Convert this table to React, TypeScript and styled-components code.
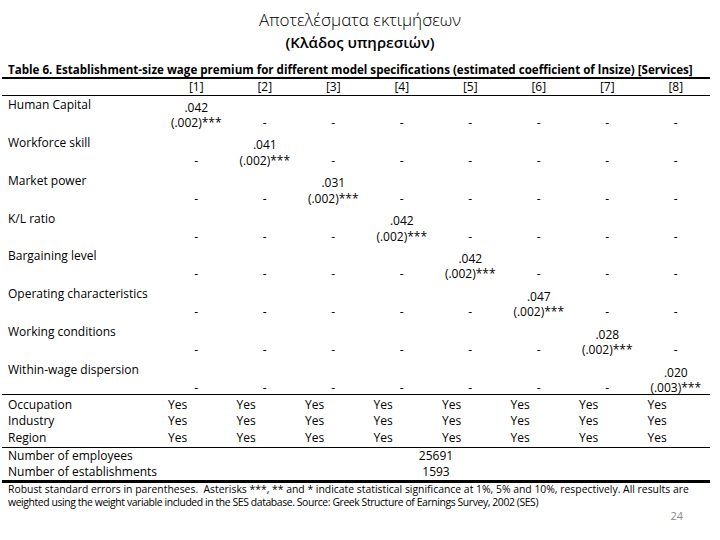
import React from "react";
import styled, { createGlobalStyle } from "styled-components";

const Global = createGlobalStyle`
  html, body { margin: 0; padding: 0; background: #ffffff; }
  body { font-family: "Open Sans", "Noto Sans", sans-serif; color: #000; }
`;

const Slide = styled.div`
  width: 720px;
  height: 540px;
  box-sizing: border-box;
  overflow: hidden;
  display: flex;
  flex-direction: column;
  padding: 9px 10px 0 2px;
  background: #fff;
`;

const TitleMain = styled.div`
  text-align: center;
  font-size: 17px;
  font-weight: 300;
  line-height: 22px;
  padding-left: 8px;
`;

const TitleSub = styled.div`
  text-align: center;
  font-size: 15px;
  font-weight: 600;
  line-height: 22px;
  padding-left: 8px;
`;

const Caption = styled.div`
  margin-top: 9px;
  padding-left: 6px;
  font-size: 11.6px;
  font-weight: 700;
  line-height: 15px;
  white-space: nowrap;
  border-bottom: 2px solid #000;
`;

const Grid = styled.div`
  display: grid;
  grid-template-columns: 160px repeat(8, 68.5px);
`;

const HeaderRow = styled(Grid)`
  height: 16px;
  line-height: 16px;
  font-size: 12px;
  border-bottom: 1px solid #000;
`;

const HeadCell = styled.div`
  text-align: center;
`;

const Block = styled(Grid)<{ $h: number }>`
  height: ${(p) => p.$h}px;
  font-size: 12px;
`;

const Label = styled.div`
  padding-left: 6px;
  padding-top: 1px;
  line-height: 16px;
  white-space: nowrap;
`;

const ValueCell = styled.div`
  padding-top: 3.5px;
  text-align: center;
  line-height: 15.5px;
  white-space: nowrap;
`;

const Line = styled.div`
  height: 15.5px;
`;

const Controls = styled.div`
  border-top: 1px solid #000;
  border-bottom: 1px solid #000;
  padding-top: 1.5px;
  font-size: 12px;
`;

const PlainRow = styled(Grid)<{ $h: number }>`
  height: ${(p) => p.$h}px;
  line-height: ${(p) => p.$h}px;
`;

const RowLabel = styled.div`
  padding-left: 6px;
  white-space: nowrap;
`;

const YesCell = styled.div`
  padding-left: 6px;
`;

const Counts = styled.div`
  border-bottom: 3px solid #000;
  font-size: 12px;
`;

const SpanCell = styled.div`
  grid-column: 2 / -1;
  text-align: center;
`;

const Note = styled.div<{ $tight?: boolean }>`
  padding-left: 6px;
  font-size: 10.4px;
  line-height: 13.5px;
  letter-spacing: ${(p) => (p.$tight ? "-0.4px" : "0")};
  white-space: nowrap;
`;

const PageNum = styled.div`
  text-align: right;
  padding-right: 27px;
  font-size: 11px;
  line-height: 12px;
  color: #8a8a8a;
`;

const vars = [
  "Human Capital",
  "Workforce skill",
  "Market power",
  "K/L ratio",
  "Bargaining level",
  "Operating characteristics",
  "Working conditions",
  "Within-wage dispersion",
];

const coefs: [string, string][] = [
  [".042", "(.002)***"],
  [".041", "(.002)***"],
  [".031", "(.002)***"],
  [".042", "(.002)***"],
  [".042", "(.002)***"],
  [".047", "(.002)***"],
  [".028", "(.002)***"],
  [".020", "(.003)***"],
];

const cols = [1, 2, 3, 4, 5, 6, 7, 8];

export default function App() {
  return (
    <>
      <Global />
      <Slide>
        <TitleMain>Αποτελέσματα εκτιμήσεων</TitleMain>
        <TitleSub>(Κλάδος υπηρεσιών)</TitleSub>
        <Caption>
          Table 6. Establishment-size wage premium for different model specifications (estimated
          coefficient of lnsize) [Services]
        </Caption>
        <HeaderRow>
          <div />
          {cols.map((c) => (
            <HeadCell key={c}>[{c}]</HeadCell>
          ))}
        </HeaderRow>
        {vars.map((v, i) => (
          <Block key={v} $h={i === vars.length - 1 ? 33 : 37.86}>
            <Label>{v}</Label>
            {cols.map((c, j) => (
              <ValueCell key={c}>
                <Line>{j === i ? coefs[i][0] : ""}</Line>
                <Line>{j === i ? coefs[i][1] : "-"}</Line>
              </ValueCell>
            ))}
          </Block>
        ))}
        <Controls>
          {["Occupation", "Industry", "Region"].map((r) => (
            <PlainRow key={r} $h={16.7}>
              <RowLabel>{r}</RowLabel>
              {cols.map((c) => (
                <YesCell key={c}>Yes</YesCell>
              ))}
            </PlainRow>
          ))}
        </Controls>
        <Counts>
          <PlainRow $h={16}>
            <RowLabel>Number of employees</RowLabel>
            <SpanCell>25691</SpanCell>
          </PlainRow>
          <PlainRow $h={16}>
            <RowLabel>Number of establishments</RowLabel>
            <SpanCell>1593</SpanCell>
          </PlainRow>
        </Counts>
        <Note>
          Robust standard errors in parentheses.&nbsp; Asterisks ***, ** and * indicate statistical
          significance at 1%, 5% and 10%, respectively. All results are
        </Note>
        <Note $tight>
          weighted using the weight variable included in the SES database. Source: Greek Structure of
          Earnings Survey, 2002 (SES)
        </Note>
        <PageNum>24</PageNum>
      </Slide>
    </>
  );
}
